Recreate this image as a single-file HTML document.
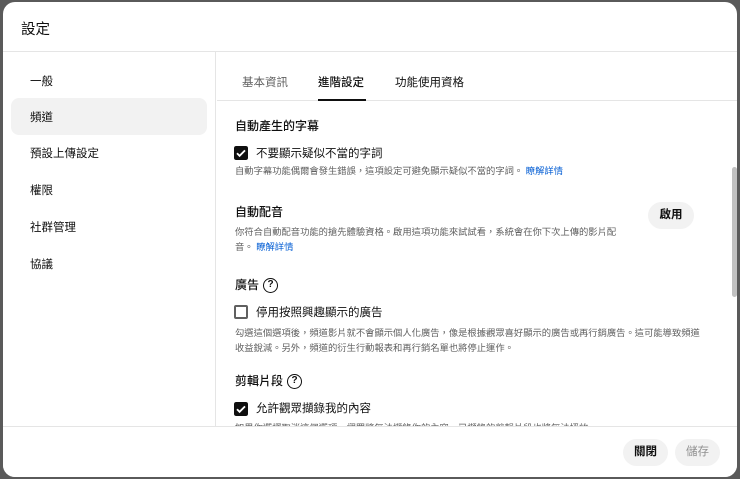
<!DOCTYPE html>
<html><head><meta charset="utf-8"><style>
*{margin:0;padding:0;box-sizing:border-box}
body{width:740px;height:479px;background:#5a5a5a;font-family:"Liberation Sans","Noto Sans CJK TC",sans-serif;color:#0f0f0f;overflow:hidden;position:relative}
.dlg{position:absolute;left:3px;top:2px;width:734px;height:475px;background:#fff;border-radius:12px;overflow:hidden}
.hdr{position:absolute;left:0;top:0;width:100%;height:50px;border-bottom:1px solid #e5e5e5}
.hdr h1{position:absolute;left:18px;top:16px;font-size:14.5px;font-weight:400}
.nav{position:absolute;left:0;top:50px;width:213px;height:374px;border-right:1px solid #e5e5e5}
.nav div{position:absolute;left:8px;width:196px;height:37px;border-radius:8px;font-size:11.5px;padding:11px 0 0 19px}
.nav .sel{background:#f2f2f2}
.tabs{position:absolute;left:214px;top:50px;width:520px;height:49px;border-bottom:1px solid #e5e5e5;font-size:11.5px}
.tabs span{position:absolute;top:22px}
.ul{position:absolute;left:315px;top:97px;width:48px;height:2px;background:#0f0f0f}
.c{position:absolute;left:232px;font-size:11.5px}
.h{font-size:12px;font-weight:500}
.d{font-size:9.3px;color:#606060;line-height:15px}
.a{color:#065fd4}
.cb{position:absolute;width:14px;height:14px;border-radius:2px}
.off{border:2px solid #606060}
.q{display:inline-block;width:15px;height:15px;border:1.5px solid #0f0f0f;border-radius:50%;font-size:10px;text-align:center;line-height:12px;font-weight:700;vertical-align:middle;margin-left:4px}
.btn{position:absolute;border-radius:18px;background:#f2f2f2;font-size:11.5px;font-weight:700;text-align:center;line-height:27px}
.ftr{position:absolute;left:0;top:424px;width:100%;height:51px;border-top:1px solid #e5e5e5;background:#fff}
.sb{position:absolute;left:729px;top:165px;width:5px;height:130px;background:#c1c1c1;border-radius:3px}
</style></head><body>
<div class="dlg">
<div class="hdr"><h1>設定</h1></div>
<div class="nav">
<div style="top:10px">一般</div>
<div class="sel" style="top:46px">頻道</div>
<div style="top:82px">預設上傳設定</div>
<div style="top:119px">權限</div>
<div style="top:156px">社群管理</div>
<div style="top:193px">協議</div>
</div>
<div class="tabs"><span style="left:25px;color:#606060">基本資訊</span><span style="left:101px;font-weight:500">進階設定</span><span style="left:178px;color:#0f0f0f">功能使用資格</span></div>
<div class="ul"></div>
<div class="c h" style="top:115px">自動產生的字幕</div>
<svg class="cb" style="left:231px;top:144px" viewBox="0 0 14 14"><rect width="14" height="14" rx="2" fill="#0f0f0f"/><path d="M3 7.2l2.6 2.6L11 4.4" stroke="#fff" stroke-width="1.8" fill="none"/></svg>
<div class="c" style="left:253px;top:143px">不要顯示疑似不當的字詞</div>
<div class="c d" style="top:162px">自動字幕功能偶爾會發生錯誤，這項設定可避免顯示疑似不當的字詞。 <span class="a">瞭解詳情</span></div>
<div class="c h" style="top:201px">自動配音</div>
<div class="c d" style="top:223px;width:395px">你符合自動配音功能的搶先體驗資格。啟用這項功能來試試看，系統會在你下次上傳的影片配音。 <span class="a">瞭解詳情</span></div>
<div class="btn" style="left:645px;top:200px;width:46px">啟用</div>
<div class="c h" style="top:274px">廣告<span class="q">?</span></div>
<div class="cb off" style="left:231px;top:303px"></div>
<div class="c" style="left:253px;top:302px">停用按照興趣顯示的廣告</div>
<div class="c d" style="top:324px;width:474px">勾選這個選項後，頻道影片就不會顯示個人化廣告，像是根據觀眾喜好顯示的廣告或再行銷廣告。這可能導致頻道收益銳減。另外，頻道的衍生行動報表和再行銷名單也將停止運作。</div>
<div class="c h" style="top:370px">剪輯片段<span class="q">?</span></div>
<svg class="cb" style="left:231px;top:400px" viewBox="0 0 14 14"><rect width="14" height="14" rx="2" fill="#0f0f0f"/><path d="M3 7.2l2.6 2.6L11 4.4" stroke="#fff" stroke-width="1.8" fill="none"/></svg>
<div class="c" style="left:253px;top:398px">允許觀眾擷錄我的內容</div>
<div class="c d" style="top:419px">如果你選擇取消這個選項，觀眾將無法擷錄你的內容，已擷錄的剪輯片段也將無法播放。</div>
<div class="sb"></div>
<div class="ftr">
<div class="btn" style="left:620px;top:12px;width:45px">關閉</div>
<div class="btn" style="left:672px;top:12px;width:45px;color:#909090;font-weight:400">儲存</div>
</div>
</div>
</body></html>
